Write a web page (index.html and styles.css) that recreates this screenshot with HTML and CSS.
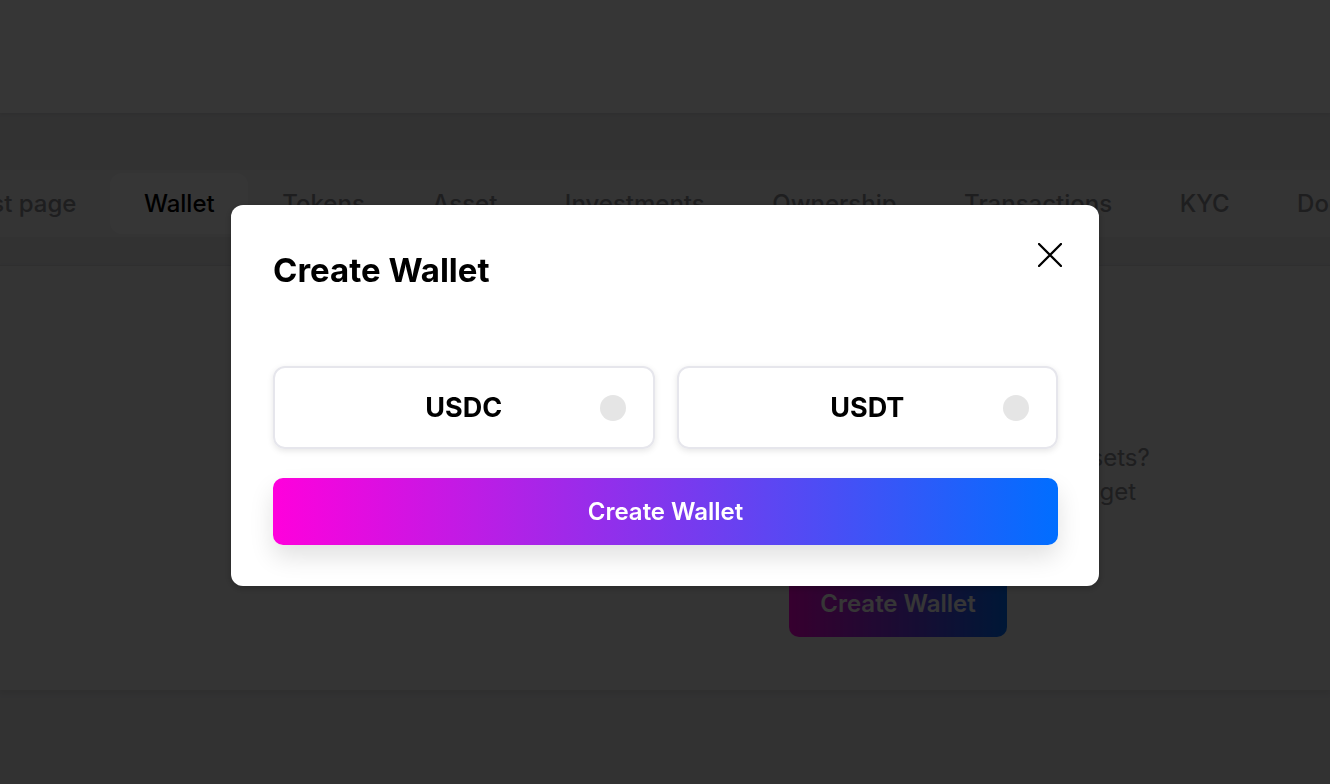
FILE: index.html
```html
<!DOCTYPE html>
<html lang="en">
<head>
  <meta charset="UTF-8">
  <meta name="viewport" content="width=device-width, initial-scale=1.0">
  <title>Wallet</title>
  <link rel="stylesheet" href="styles.css">
</head>
<body>
  <header class="topbar"></header>

  <main class="page">
    <nav class="tabs">
      <ul class="tab-list">
        <li class="tab">First page</li>
        <li class="tab active">Wallet</li>
        <li class="tab">Tokens</li>
        <li class="tab">Asset</li>
        <li class="tab">Investments</li>
        <li class="tab">Ownership</li>
        <li class="tab">Transactions</li>
        <li class="tab">KYC</li>
        <li class="tab">Documents</li>
      </ul>
    </nav>

    <section class="wallet-card">
      <div class="wallet-art"></div>
      <div class="wallet-intro">
        <p>Would you like to invest in tokenized assets?<br>Create your own wallet in minutes and get<br>started.</p>
        <button class="btn-gradient">Create Wallet</button>
      </div>
    </section>
  </main>

  <div class="overlay">
    <div class="modal">
      <button class="modal-close" aria-label="Close">
        <svg width="24" height="24" viewBox="0 0 24 24" fill="none" stroke="#000" stroke-width="2.3" stroke-linecap="round">
          <path d="M1 1L23 23M23 1L1 23"/>
        </svg>
      </button>
      <h2 class="modal-title">Create Wallet</h2>

      <div class="options">
        <label class="option">USDC<span class="option-dot"></span></label>
        <label class="option">USDT<span class="option-dot"></span></label>
      </div>

      <button class="btn-gradient btn-wide">Create Wallet</button>
    </div>
  </div>
</body>
</html>
```

FILE: styles.css
```css
body {
  margin: 0;
  font-family: Inter, "Noto Sans", sans-serif;
  background: #e9e9eb;
  height: 100vh;
  overflow: hidden;
}

.topbar {
  height: 113px;
  background: #fff;
  box-shadow: 0 1px 4px rgba(0, 0, 0, 0.08);
}

.page {
  padding-top: 57px;
}

.tabs {
  background: #f3f3f5;
  padding: 3px 0;
  overflow: hidden;
}

.tab-list {
  list-style: none;
  display: flex;
  margin: 0 0 0 -72px; /* list is scrolled sideways */
  padding: 0;
}

.tab {
  padding: 0 33.75px;
  height: 61px;
  line-height: 61px;
  font-size: 24px;
  font-weight: 500;
  color: #8e8e93;
  white-space: nowrap;
  border-radius: 12px;
}

.tab.active {
  background: #fff;
  color: #000;
}

.wallet-card {
  margin-top: 28px;
  border-top: 1px solid #dcdcdf;
  background: #f3f3f5;
  display: grid;
  grid-template-columns: 1fr 508px;
  padding: 175px 178px 53px 0;
  box-shadow: 0 3px 6px rgba(0, 0, 0, 0.08);
}

.wallet-intro {
  text-align: center;
}

.wallet-intro p {
  margin: 0;
  font-size: 24px;
  line-height: 34px;
  color: #8e8e93;
  white-space: nowrap;
}

.btn-gradient {
  border: none;
  border-radius: 10px;
  background: linear-gradient(90deg, #ff00dc, #006eff);
  color: #fff;
  font-family: inherit;
  font-size: 24px;
  font-weight: 600;
  height: 68px;
  padding: 0 31px;
  cursor: pointer;
}

.wallet-intro .btn-gradient {
  margin-top: 26px;
}

.overlay {
  position: fixed;
  inset: 0;
  background: rgba(0, 0, 0, 0.79);
  display: flex;
  align-items: center;
  justify-content: center;
  padding-top: 7px;
  box-sizing: border-box;
}

.modal {
  position: relative;
  width: 868px;
  box-sizing: border-box;
  background: #fff;
  border-radius: 12px;
  padding: 45px 41px 41px 42px;
  box-shadow: 0 2px 8px rgba(0, 0, 0, 0.25);
}

.modal-close {
  position: absolute;
  top: 38px;
  right: 37px;
  width: 24px;
  height: 24px;
  padding: 0;
  border: none;
  background: none;
  cursor: pointer;
}

.modal-close svg {
  display: block;
}

.modal-title {
  margin: 0;
  font-size: 33px;
  line-height: 40px;
  font-weight: 700;
  color: #000;
}

.options {
  margin-top: 76px;
  display: grid;
  grid-template-columns: 1fr 1fr;
  gap: 22px;
}

.option {
  position: relative;
  height: 83px;
  box-sizing: border-box;
  border: 2px solid #e6e6ec;
  border-radius: 12px;
  box-shadow: 0 2px 6px rgba(0, 0, 0, 0.1);
  display: flex;
  align-items: center;
  justify-content: center;
  font-size: 27px;
  font-weight: 700;
  color: #000;
  cursor: pointer;
}

.option-dot {
  position: absolute;
  right: 27px;
  top: 50%;
  width: 26px;
  height: 26px;
  margin-top: -13px;
  border-radius: 50%;
  background: #e5e5e5;
}

.btn-wide {
  display: block;
  width: 100%;
  height: 67px;
  margin-top: 29px;
  box-shadow: 0 12px 24px rgba(0, 0, 0, 0.12);
}
```
